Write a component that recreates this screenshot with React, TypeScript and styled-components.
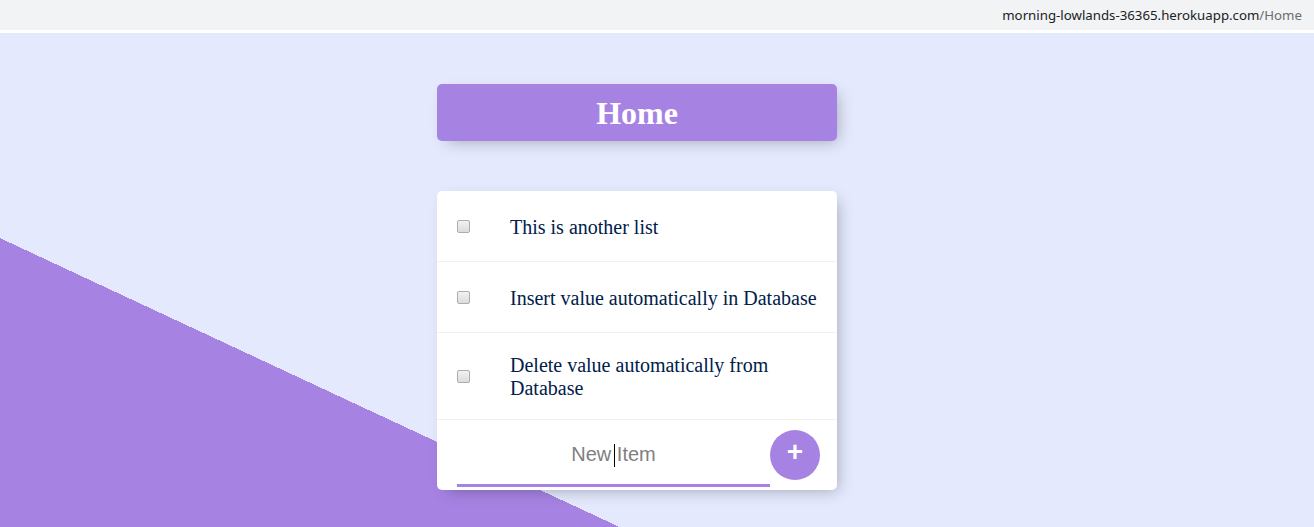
import React from "react";
import styled, { createGlobalStyle } from "styled-components";

const GlobalStyle = createGlobalStyle`
  html, body { margin: 0; padding: 0; }
  body {
    font-family: "Liberation Serif", "Times New Roman", serif;
    background: #E4E9FD;
  }
`;

const Shell = styled.div`
  display: flex;
  flex-direction: column;
  min-height: 100vh;
`;

const AddressBar = styled.div`
  height: 30px;
  background: #f1f3f4;
  border-bottom: 3px solid #ffffff;
  display: flex;
  align-items: center;
  justify-content: flex-end;
  padding: 0 12px;
  font-family: "Noto Sans", "Open Sans", sans-serif;
  font-size: 13.25px;
  color: #202124;
`;

const UrlPath = styled.span`
  color: #6a6d72;
`;

const Page = styled.main`
  flex: 1;
  display: flex;
  flex-direction: column;
  align-items: center;
  padding: 51px 40px 0 0;
  gap: 50px;
  background-color: #E4E9FD;
  background-image: linear-gradient(25deg, #A683E3 50%, #E4E9FD 50%);
  background-size: 1314px 1023px;
  background-repeat: no-repeat;
  background-position: left top;
`;

const Box = styled.section<{ $accent?: boolean }>`
  width: 400px;
  background: ${(p) => (p.$accent ? "#A683E3" : "#ffffff")};
  border-radius: 5px;
  box-shadow: 5px 5px 15px -5px rgba(0, 0, 0, 0.3);
  text-align: ${(p) => (p.$accent ? "center" : "left")};
`;

const Title = styled.h1`
  margin: 0;
  padding: 11px 10px 9px;
  color: #ffffff;
  font-size: 32px;
  font-weight: bold;
  line-height: 37px;
`;

const Item = styled.div<{ $last?: boolean }>`
  min-height: 70px;
  display: flex;
  align-items: center;
  border-bottom: ${(p) => (p.$last ? "0" : "1px solid #F1F1F1")};
`;

const Check = styled.input`
  appearance: none;
  -webkit-appearance: none;
  flex: none;
  width: 13px;
  height: 13px;
  margin: 20px;
  border: 1px solid #adadad;
  border-radius: 2px;
  background: linear-gradient(#f2f2f2, #dcdcdc);
  box-sizing: border-box;
`;

const ItemText = styled.p`
  margin: 0;
  padding: 21px 20px 19px;
  font-size: 20px;
  line-height: 23px;
  font-weight: 200;
  color: #00204a;
`;

const Form = styled.form`
  display: flex;
  align-items: center;
  height: 70px;
  margin-left: 20px;
`;

const InputWrap = styled.div`
  position: relative;
  width: 313px;
  height: 63px;
  margin-top: 1px;
`;

const TextInput = styled.input`
  width: 100%;
  height: 100%;
  box-sizing: border-box;
  padding: 0 0 2px;
  border: none;
  background: transparent;
  text-align: center;
  font-family: "Liberation Sans", Arial, sans-serif;
  font-size: 20px;
  color: #000;
  caret-color: transparent;
  outline: none;
  box-shadow: inset 0 -3px 0 0 #A683E3;
  &::placeholder {
    color: grey;
    opacity: 1;
  }
`;

const Caret = styled.span`
  position: absolute;
  left: 50%;
  top: 20px;
  width: 1px;
  height: 23px;
  background: #000;
  pointer-events: none;
`;

const AddButton = styled.button`
  flex: none;
  width: 50px;
  height: 50px;
  margin-top: -1px;
  border-radius: 50%;
  border: 0;
  background-color: #A683E3;
  color: #ffffff;
  font-family: "Liberation Sans", Arial, sans-serif;
  font-size: 28px;
  font-weight: bold;
  line-height: 1;
  padding: 0 0 5px;
  display: flex;
  align-items: center;
  justify-content: center;
`;

const items = [
  "This is another list",
  "Insert value automatically in Database",
  "Delete value automatically from Database",
];

export default function App() {
  return (
    <>
      <GlobalStyle />
      <Shell>
        <AddressBar>
          morning-lowlands-36365.herokuapp.com<UrlPath>/Home</UrlPath>
        </AddressBar>
        <Page>
          <Box $accent>
            <Title>Home</Title>
          </Box>
          <Box>
            {items.map((t, i) => (
              <Item key={i}>
                <Check type="checkbox" />
                <ItemText>{t}</ItemText>
              </Item>
            ))}
            <Item $last>
              <Form onSubmit={(e) => e.preventDefault()}>
                <InputWrap>
                  <TextInput type="text" placeholder="New Item" autoComplete="off" />
                  <Caret />
                </InputWrap>
                <AddButton type="submit">+</AddButton>
              </Form>
            </Item>
          </Box>
        </Page>
      </Shell>
    </>
  );
}
